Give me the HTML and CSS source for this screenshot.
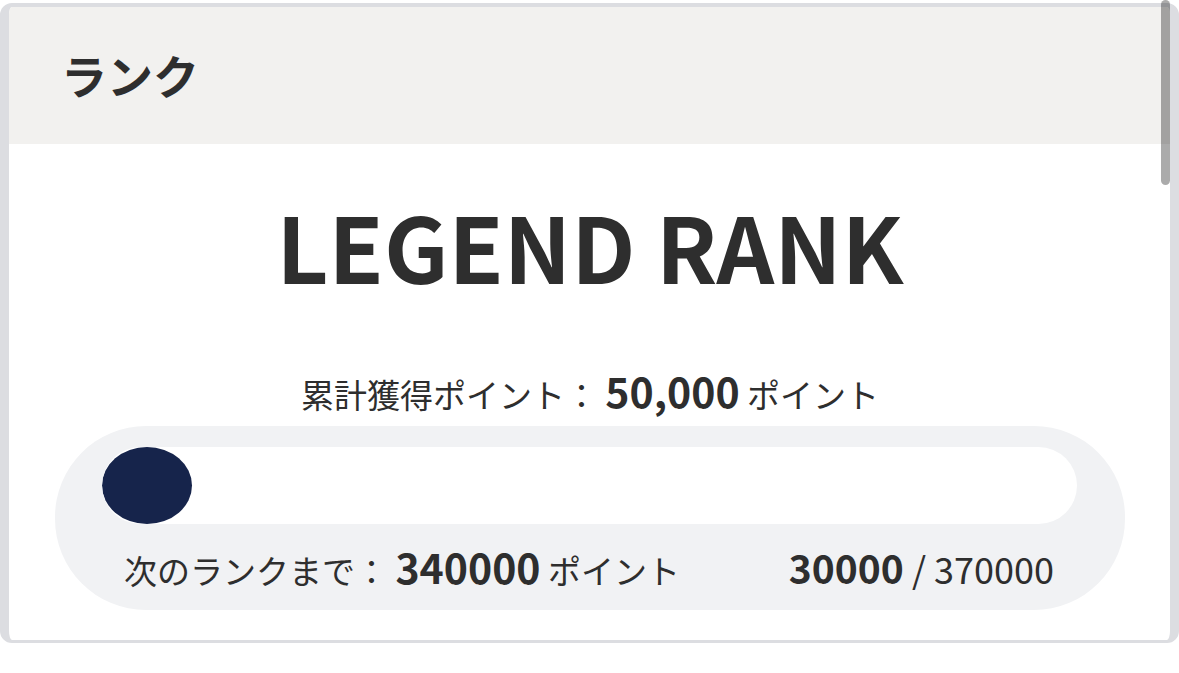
FILE: index.html
```html
<!DOCTYPE html>
<html lang="ja">
<head>
<meta charset="utf-8">
<title>ランク</title>
<link rel="stylesheet" href="styles.css">
</head>
<body>
<div class="card">
  <div class="card-header">ランク</div>
  <div class="card-body">
    <div class="rank-name">LEGEND RANK</div>
    <div class="total">累計獲得ポイント：&nbsp;<span class="num">50,000</span> ポイント</div>
    <div class="progress-box">
      <div class="track"><div class="fill" style="width: 9.25%"></div></div>
      <div class="labels">
        <div class="next">次のランクまで：&nbsp;<span class="num">340000</span> ポイント</div>
        <div class="ratio"><span class="num">30000</span> / 370000</div>
      </div>
    </div>
  </div>
</div>
<div class="scrollbar"></div>
</body>
</html>
```
FILE: styles.css
```css
html, body {
  margin: 0;
  padding: 0;
  background: #ffffff;
}
body {
  font-family: "Noto Sans CJK JP", "Noto Sans", sans-serif;
  color: #2e2e2e;
}
.card {
  margin-top: 3px;
  width: 1179px;
  box-sizing: border-box;
  border-style: solid;
  border-color: #dcdde1;
  border-width: 4px 9px 3px 9px;
  border-radius: 12px;
  overflow: hidden;
  background: #ffffff;
}
.card-header {
  height: 137px;
  background: #f2f1ef;
  display: flex;
  align-items: center;
  padding-left: 52px;
  padding-bottom: 4px;
  box-sizing: border-box;
  font-size: 46px;
  font-weight: 700;
  line-height: 1;
}
.card-body {
  padding: 46px 45px 30px 46px;
}
.rank-name {
  text-align: center;
  font-size: 90px;
  font-weight: 700;
  line-height: 110px;
}
.total {
  margin-top: 70px;
  text-align: center;
  font-size: 33px;
  line-height: 48px;
}
.num {
  font-weight: 700;
  line-height: 0;
}
.total .num,
.next .num {
  font-size: 41px;
}
.progress-box {
  margin-top: 8px;
  background: #f1f2f4;
  border-radius: 91px;
  padding: 21px 48px 16px 47px;
}
.track {
  height: 77px;
  background: #ffffff;
  border-radius: 39px;
  overflow: hidden;
}
.fill {
  height: 100%;
  background: #16244b;
  border-radius: 50%;
}
.labels {
  margin-top: 20px;
  display: flex;
  justify-content: space-between;
  align-items: baseline;
  padding: 0 23px 0 22px;
  font-size: 33px;
  line-height: 48px;
}
.ratio {
  font-size: 36px;
}
.ratio .num {
  font-size: 39px;
}
.scrollbar {
  position: fixed;
  top: 0;
  right: 9px;
  width: 9px;
  height: 185px;
  border-radius: 5px;
  background: rgba(0, 0, 0, 0.33);
}
```
